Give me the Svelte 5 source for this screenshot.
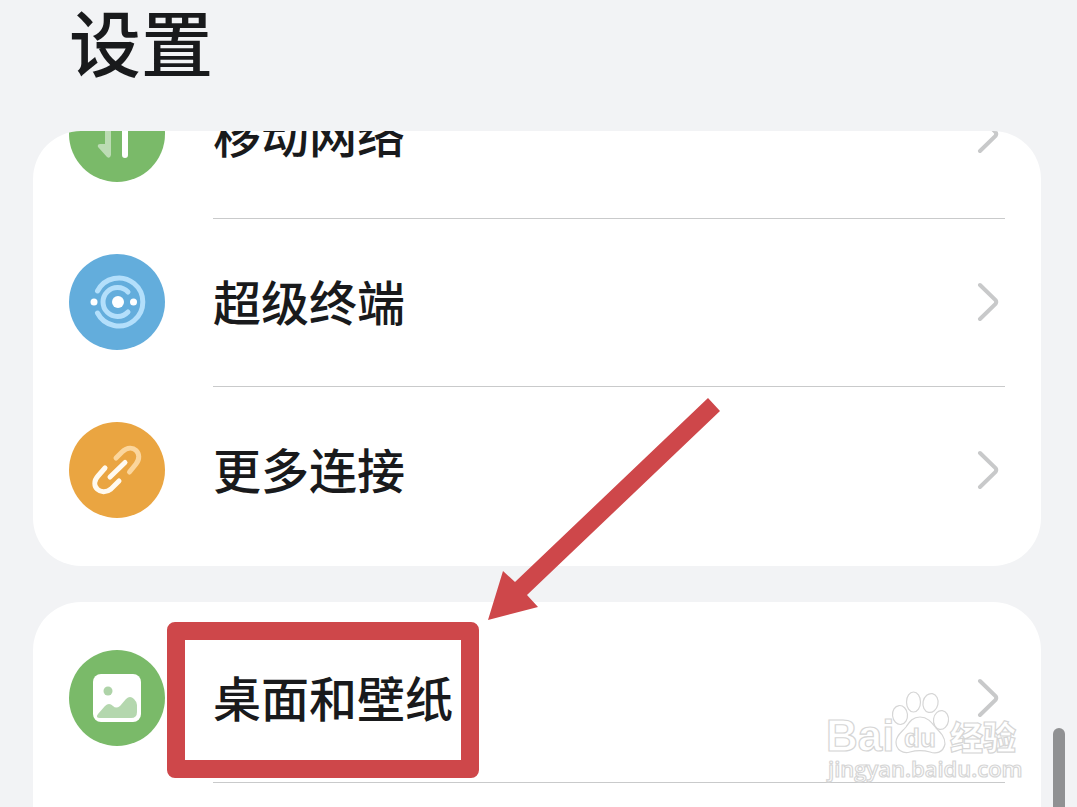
<script lang="ts">
	type Item = {
		id: string;
		label: string;
		color: string;
		marked?: boolean;
	};

	const groups: Item[][] = [
		[
			{ id: 'network', label: '移动网络', color: 'green' },
			{ id: 'super', label: '超级终端', color: 'blue' },
			{ id: 'link', label: '更多连接', color: 'orange' }
		],
		[{ id: 'wallpaper', label: '桌面和壁纸', color: 'green', marked: true }]
	];
</script>

<div class="page">
	<h1>设置</h1>

	{#each groups as items, g}
		<ul class="card" class:scrolled={g === 0} class:last={g === groups.length - 1}>
			{#each items as item}
				<li>
					<a class="row" href="#{item.id}">
						<span class="icon {item.color}">
							<svg viewBox="0 0 96 96" aria-hidden="true">
								{#if item.id === 'network'}
									<path
										d="M56 69V27L65 36"
										fill="none"
										stroke="#fff"
										stroke-width="6"
										stroke-linecap="round"
										stroke-linejoin="round"
									/>
									<path d="M36 24H42V69Q41 73 38 71L29 61Q28 58 31 58H36Z" fill="#bcdcb4" />
								{:else if item.id === 'super'}
									<g fill="none" stroke="#b3dffb" stroke-width="5" stroke-linecap="round">
										<path d="M28.500 37A24 24 0 1 1 28.500 59" />
										<path d="M59 38A14.500 14.500 0 1 0 59 58" />
									</g>
									<g fill="#fff">
										<circle cx="49" cy="48" r="6" />
										<circle cx="25" cy="48" r="3.500" />
										<circle cx="64.500" cy="48" r="3.500" />
									</g>
								{:else if item.id === 'link'}
									<g fill="none" stroke-width="5" stroke-linecap="round">
										<path d="M47 36L53 30C64 20 75 32 67 42L60.500 50" stroke="#fbd69d" />
										<path d="M36 46L29 54C20 64 32 75 42 67L50 59" stroke="#fffaf0" />
										<path d="M41 55L56 40.500" stroke="#fffaf0" />
									</g>
								{:else}
									<rect x="24" y="24" width="48" height="48" rx="8" fill="#fff" />
									<circle cx="39" cy="41" r="4.500" fill="#aed3a8" />
									<path d="M29 64L36 56Q40 52 44 56Q47 59 51 56L57 49Q61 45 65 49Q68 52 68 55V62Q68 68 62 68H31Q26 68 29 64Z" fill="#b4d7ae" />
								{/if}
							</svg>
						</span>
						<span class="body">
							<span class="label">{item.label}</span>
							<svg class="chevron" viewBox="0 0 22 40" aria-hidden="true">
								<path d="M3 3L18.500 18Q20 20 18.500 22L3 37" />
							</svg>
							{#if item.marked}
								<span class="frame"></span>
								<svg class="arrow" viewBox="0 0 234 222" aria-hidden="true">
									<path d="M220 0L232 13L39 197L50 209L0 222L15 173L27 184Z" />
								</svg>
							{/if}
						</span>
					</a>
				</li>
			{/each}
		</ul>
	{/each}

	<svg class="watermark" viewBox="0 0 200 100">
		<g class="outline">
			<text class="latin" x="3" y="61" font-size="44">Bai</text>
			<ellipse cx="77" cy="25" rx="7.500" ry="9.500" transform="rotate(-6 77 25)" />
			<ellipse cx="90.500" cy="12" rx="7" ry="10" />
			<ellipse cx="107.500" cy="13" rx="7.500" ry="9.500" transform="rotate(12 107.500 13)" />
			<ellipse cx="118" cy="30" rx="7.500" ry="9.500" transform="rotate(8 118 30)" />
			<path d="M97 27C105 27 109 33 113 38C118 43 122 47 122 54C120 63 113 64 107 62C100 60 94 60 87 62C80 64 73 60 73 52C73 45 79 42 83 37C87 31 90 27 97 27Z" />
			<text class="latin" x="81" y="57" font-size="26">du</text>
			<text class="cjk" x="127" y="60" font-size="33">经验</text>
			<text class="url" x="5" y="87" font-size="22">jingyan.baidu.com</text>
		</g>
	</svg>

	<div class="scrollbar"></div>
</div>

<style>
	:global(body) {
		background: #f2f3f5;
	}

	.page {
		display: flex;
		flex-direction: column;
		box-sizing: border-box;
		height: 100vh;
		padding: 0 36px 0 33px;
		overflow: hidden;
		position: relative;
		background: #f2f3f5;
		color: #191a1c;
		font-family: 'Noto Sans CJK SC', sans-serif;
	}

	h1 {
		flex: none;
		margin: 0;
		padding: 0 36px 51px;
		font-size: 72px;
		font-weight: 500;
		line-height: 80px;
	}

	.card {
		flex: none;
		margin: 0 0 36px;
		padding: 12px 0;
		list-style: none;
		background: #fff;
		border-radius: 48px;
	}

	.card.scrolled {
		padding-top: 0;
		overflow: hidden;
	}

	/* the first row has been scrolled halfway under the header */
	.card.scrolled li:first-child {
		margin-top: -81px;
	}

	.card.last {
		flex: 1 0 auto;
		margin-bottom: 0;
		border-radius: 48px 48px 0 0;
	}

	.row {
		display: flex;
		align-items: center;
		gap: 48px;
		height: 168px;
		padding: 0 36px;
		color: inherit;
		text-decoration: none;
	}

	.icon {
		flex: none;
		width: 96px;
		height: 96px;
		border-radius: 50%;
	}

	.icon svg {
		display: block;
	}

	.green {
		background: #7aba69;
	}

	.blue {
		background: #63addc;
	}

	.orange {
		background: #eaa541;
	}

	.body {
		flex: 1;
		display: flex;
		align-items: center;
		justify-content: space-between;
		position: relative;
		box-sizing: border-box;
		height: 169px;
		padding-right: 6px;
		border-bottom: 1px solid #c9cacb;
	}

	.scrolled li:last-child .body {
		border-color: transparent;
	}

	.label {
		padding-bottom: 4px;
		font-size: 48px;
		font-weight: 500;
		line-height: 72px;
	}

	.chevron {
		width: 22px;
		height: 40px;
		fill: none;
		stroke: #c8c9ca;
		stroke-width: 4;
		stroke-linecap: round;
	}

	.frame {
		position: absolute;
		left: -46px;
		top: 8px;
		box-sizing: border-box;
		width: 312px;
		height: 156px;
		border: 18px solid #ce474a;
		border-radius: 8px;
	}

	.arrow {
		position: absolute;
		left: 275px;
		top: -216px;
		width: 234px;
		height: 222px;
		fill: #ce474a;
	}

	.watermark {
		position: absolute;
		right: 54px;
		bottom: 17px;
		width: 200px;
		height: 100px;
	}

	.outline {
		fill: #fff;
		stroke: #d6d6d6;
		stroke-width: 1.2;
	}

	.latin {
		font-family: 'Liberation Sans', sans-serif;
		font-weight: 700;
	}

	.cjk {
		font-family: 'Noto Sans CJK SC', sans-serif;
		font-weight: 900;
	}

	.url {
		font-family: 'Open Sans', sans-serif;
		font-weight: 600;
	}

	.scrollbar {
		position: absolute;
		right: 12px;
		bottom: 0;
		width: 12px;
		height: 79px;
		border-radius: 6px 6px 0 0;
		background: #909193;
	}
</style>
